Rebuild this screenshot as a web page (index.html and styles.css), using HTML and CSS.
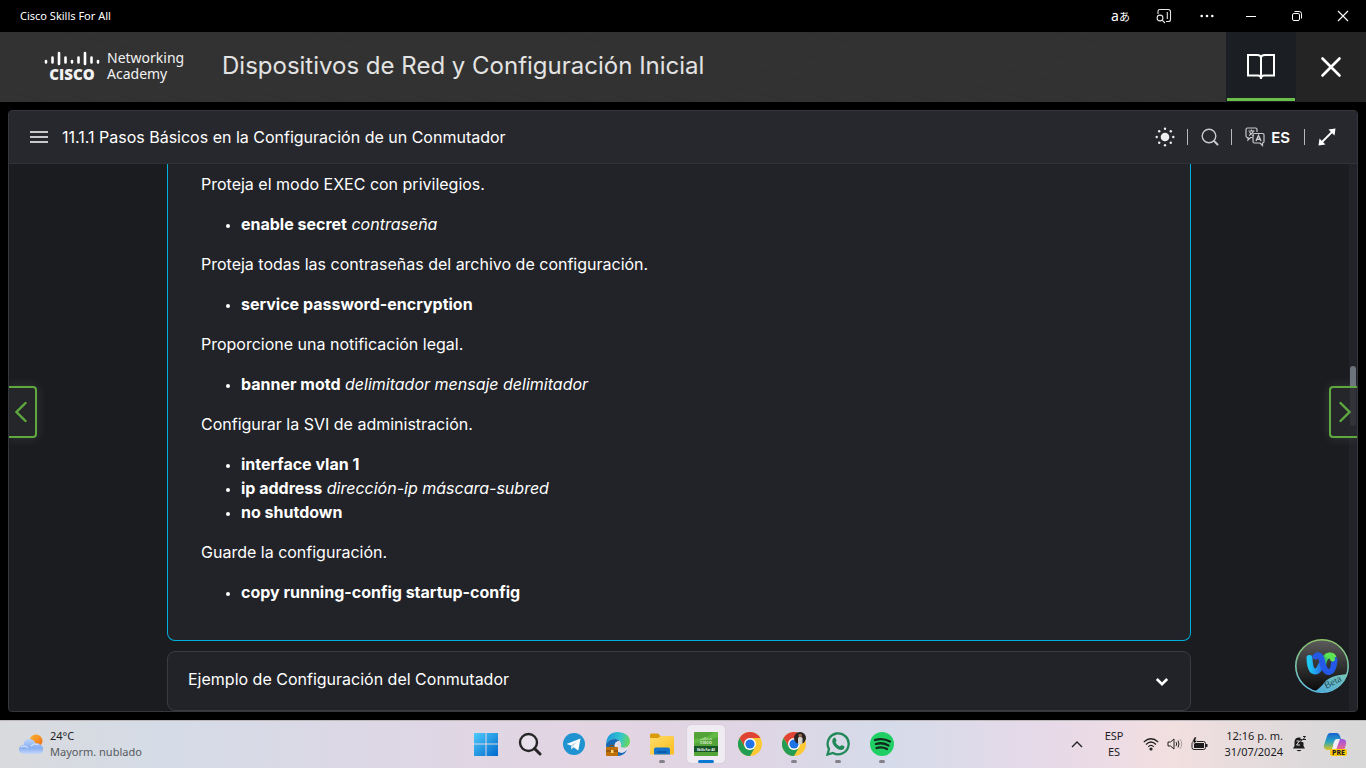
FILE: index.html
```html
<!DOCTYPE html>
<html lang="es">
<head>
<meta charset="utf-8">
<meta name="viewport" content="width=device-width, initial-scale=1">
<title>Cisco Skills For All</title>
<link rel="stylesheet" href="styles.css">
</head>
<body>
<div class="titlebar">
  <span class="titlebar-name">Cisco Skills For All</span>
  <div class="window-controls">
    <button class="win-btn translate-btn" aria-label="Traducir"><span class="latin-a">a</span><span class="kana-a">あ</span></button>
    <button class="win-btn" aria-label="Buscar en la barra lateral">
      <svg width="16" height="16" viewBox="0 0 16 16" fill="none" stroke="#e6e6e6" stroke-width="1.1"><path d="M2 6V3.2Q2 1.5 3.7 1.5H12.3Q14.5 1.5 14.5 3.7V11.5Q14.5 13.5 12.5 13.5H10M11.3 4V11"/><circle cx="4" cy="10" r="2.9"/><path d="M6.1 12.1L9 15"/></svg>
    </button>
    <button class="win-btn" aria-label="Más opciones">
      <svg width="16" height="16" viewBox="0 0 16 16" fill="#fff"><circle cx="2.7" cy="8" r="1.3"/><circle cx="8" cy="8" r="1.3"/><circle cx="13.3" cy="8" r="1.3"/></svg>
    </button>
    <button class="win-btn wide" aria-label="Minimizar">
      <svg width="12" height="12" viewBox="0 0 12 12" stroke="#fff"><path d="M1 6.5H11"/></svg>
    </button>
    <button class="win-btn wide" aria-label="Restaurar">
      <svg width="12" height="12" viewBox="0 0 12 12" fill="none" stroke="#fff"><rect x="1.5" y="3.5" width="7" height="7" rx="1.4"/><path d="M3.5 1.5H8.2Q10.5 1.5 10.5 3.8V8.5"/></svg>
    </button>
    <button class="win-btn wide" aria-label="Cerrar ventana">
      <svg width="12" height="12" viewBox="0 0 12 12" stroke="#fff" stroke-width="1.1"><path d="M1 1L11 11M11 1L1 11"/></svg>
    </button>
  </div>
</div>

<header class="course-header">
  <a class="brand" href="#" aria-label="Cisco Networking Academy">
    <span class="cisco-mark">
      <svg width="56" height="15" viewBox="0 0 56 15" stroke="#fff" stroke-width="2.6" stroke-linecap="round"><path d="M2 10V11.500M8.500 6.500V11.500M15 2V13M21.500 6.500V11.500M28 10V11.500M34.500 6.500V11.500M41 2V13M47.500 6.500V11.500M54 10V11.500"/></svg>
      <span class="cisco-word">CISCO</span>
    </span>
    <span class="academy-word">Networking<br>Academy</span>
  </a>
  <h1 class="course-title">Dispositivos de Red y Configuración Inicial</h1>
  <button class="header-tab" aria-label="Contenido del curso">
    <svg width="30" height="28" viewBox="0 0 30 28" fill="none" stroke="#fff" stroke-width="2"><path d="M2 2H11Q15 2 15 5Q15 2 19 2H28V22.5H18Q15 22.5 15 25.5Q15 22.5 12 22.5H2ZM15 5V26"/></svg>
  </button>
  <button class="header-close" aria-label="Cerrar curso">
    <svg width="22" height="22" viewBox="0 0 22 22" stroke="#fff" stroke-width="2.6" stroke-linecap="round"><path d="M2.5 2.5L19.5 19.5M19.5 2.5L2.5 19.5"/></svg>
  </button>
</header>

<main class="lesson">
  <div class="lesson-bar">
    <button class="tool menu-btn" aria-label="Menú">
      <svg width="18" height="14" viewBox="0 0 18 14" stroke="#c9c9cc" stroke-width="2"><path d="M0 2H18M0 7H18M0 12H18"/></svg>
    </button>
    <h2 class="lesson-title">11.1.1 Pasos Básicos en la Configuración de un Conmutador</h2>
    <div class="tools">
      <button class="tool" aria-label="Tema">
        <svg width="20" height="20" viewBox="0 0 20 20" fill="#eee"><circle cx="10" cy="10" r="4.3"/><circle cx="10" cy="1.7" r="1.2"/><circle cx="10" cy="18.3" r="1.2"/><circle cx="1.7" cy="10" r="1.2"/><circle cx="18.3" cy="10" r="1.2"/><circle cx="4.2" cy="4.2" r="1.2"/><circle cx="15.8" cy="4.2" r="1.2"/><circle cx="4.2" cy="15.8" r="1.2"/><circle cx="15.8" cy="15.8" r="1.2"/></svg>
      </button>
      <button class="tool ruled" aria-label="Buscar">
        <svg width="18" height="18" viewBox="0 0 18 18" fill="none" stroke="#c9c9cc" stroke-width="1.4"><circle cx="8" cy="8" r="6.8"/><path d="M13 13L16.5 16.5" stroke-width="2" stroke-linecap="round"/></svg>
      </button>
      <button class="tool ruled language">
        <svg width="20" height="20" viewBox="0 0 20 20" fill="none" stroke="#c9c9cc" stroke-width="1.2"><path d="M12 5V2.5Q12 1 10.5 1H2.5Q1 1 1 2.5V9Q1 10.5 2.5 10.5H3V13L5.5 10.5H7.5"/><path d="M3.5 4H9.5M6.5 2.5V4M8.5 4Q7.5 7 4 8.5M4.5 5Q6 8 9 8.5"/><path d="M9.5 6.5H17.5Q19 6.5 19 8V14.5Q19 16 17.5 16V18.5L15 16H9.5Q8 16 8 14.5V8Q8 6.5 9.5 6.5Z"/><path d="M11 14L13.5 8.5L16 14M11.8 12.2H15.2" stroke-width="1.4"/></svg>
        <span>ES</span>
      </button>
      <button class="tool ruled fullscreen" aria-label="Pantalla completa">
        <svg width="18" height="18" viewBox="0 0 18 18"><path d="M3 15L15 3" stroke="#fff" stroke-width="1.8"/><path d="M10.5 1.5L17.5 .5L16.5 7.5ZM.5 17.5L1.5 10.5L7.5 16.5Z" fill="#fff"/></svg>
      </button>
    </div>
  </div>

  <div class="lesson-body">
    <div class="scroll-area">
      <article class="steps">
        <p>Proteja el modo EXEC con privilegios.</p>
        <ul><li><b>enable secret</b> <i>contraseña</i></li></ul>
        <p>Proteja todas las contraseñas del archivo de configuración.</p>
        <ul><li><b>service password-encryption</b></li></ul>
        <p>Proporcione una notificación legal.</p>
        <ul><li><b>banner motd</b> <i>delimitador mensaje delimitador</i></li></ul>
        <p>Configurar la SVI de administración.</p>
        <ul>
          <li><b>interface vlan 1</b></li>
          <li><b>ip address</b> <i>dirección-ip máscara-subred</i></li>
          <li><b>no shutdown</b></li>
        </ul>
        <p>Guarde la configuración.</p>
        <ul><li><b>copy running-config startup-config</b></li></ul>
      </article>
      <button class="accordion" aria-expanded="false">
        <span>Ejemplo de Configuración del Conmutador</span>
        <svg width="14" height="10" viewBox="0 0 14 10" fill="none" stroke="#fff" stroke-width="2.6"><path d="M1.8 2L7 7.2L12.2 2"/></svg>
      </button>
    </div>
    <div class="scroll-track"></div>
    <div class="scroll-thumb"></div>
    <button class="page-nav prev" aria-label="Anterior">
      <svg width="14" height="22" viewBox="0 0 14 22" fill="none" stroke="#5fa83f" stroke-width="2.4" stroke-linecap="round"><path d="M10.5 2L1.500 11L10.5 20"/></svg>
    </button>
    <button class="page-nav next" aria-label="Siguiente">
      <svg width="14" height="22" viewBox="0 0 14 22" fill="none" stroke="#5fa83f" stroke-width="2.4" stroke-linecap="round"><path d="M3.5 2L12.500 11L3.5 20"/></svg>
    </button>
    <button class="assistant" aria-label="Asistente Beta">
      <svg width="56" height="56" viewBox="0 0 56 56">
        <defs>
          <linearGradient id="as-bg" x1="0" y1="0" x2="0" y2="1"><stop offset="0" stop-color="#5c5c5c"/><stop offset="1" stop-color="#080808"/></linearGradient>
          <linearGradient id="as-ring" x1="0" y1="0" x2="0" y2="1"><stop offset="0" stop-color="#8fc569"/><stop offset="1" stop-color="#62c4ea"/></linearGradient>
          <linearGradient id="as-left" x1="0" y1="0" x2="1" y2="0"><stop offset="0" stop-color="#20c8f4"/><stop offset="1" stop-color="#2474e8"/></linearGradient>
          <linearGradient id="as-right" x1="0" y1="1" x2="1" y2="0"><stop offset="0" stop-color="#159b80"/><stop offset="1" stop-color="#68f04c"/></linearGradient>
          <linearGradient id="as-tag" x1="0" y1="1" x2="1" y2="0"><stop offset="0" stop-color="#4aa8e0"/><stop offset="1" stop-color="#7ac8b4"/></linearGradient>
          <clipPath id="as-clip"><circle cx="28" cy="28" r="26"/></clipPath>
        </defs>
        <circle cx="28" cy="28" r="26.2" fill="url(#as-bg)" stroke="url(#as-ring)" stroke-width="1.6"/>
        <g fill="none" stroke-linecap="round" stroke-width="6">
          <path d="M29 28Q30 18 35.5 17.500Q39 17.500 39.5 20" stroke="url(#as-right)"/>
          <path d="M15.5 20Q16 34 21.5 33.5Q25 33 27 27" stroke="url(#as-left)"/>
          <path d="M21.500 18.500Q25 15 27.5 21Q30 34 34.5 34Q39.5 34 40.500 22" stroke="#2458e6"/>
          <path d="M34 17.500Q38 16.500 38.500 21" stroke="#5ce454" stroke-width="5"/>
        </g>
        <path d="M19 55Q27 49 30 45Q36 37 56 36V56H19Z" fill="url(#as-tag)" clip-path="url(#as-clip)"/>
        <text x="32" y="51" transform="rotate(-27 32 51)" class="beta">Beta</text>
      </svg>
    </button>
  </div>
</main>

<footer class="taskbar">
  <button class="weather">
    <svg width="26" height="22" viewBox="0 0 26 22">
      <defs><linearGradient id="cloud" x1="0" y1="0" x2="0" y2="1"><stop offset="0" stop-color="#bcd4fb"/><stop offset=".6" stop-color="#88aff1"/><stop offset="1" stop-color="#c5d7f8"/></linearGradient><linearGradient id="sun" x1="0" y1="0" x2="1" y2="1"><stop offset="0" stop-color="#fbb62c"/><stop offset="1" stop-color="#f16a1c"/></linearGradient></defs>
      <circle cx="18" cy="8" r="6.5" fill="url(#sun)"/>
      <path d="M5.5 21Q1 20 1 16.5Q1 12.5 5.5 12Q6 6 11.5 6Q16 6 17.5 10.5Q21 9.5 23 12Q25.5 13 25 17Q25 20.5 21 21Z" fill="url(#cloud)"/>
      <path d="M3 14.5Q6 11.5 10 15M13 13Q16 9.500 20 11.500" fill="none" stroke="#e0ebfe"/>
    </svg>
    <span class="weather-text"><span>24°C</span><span class="muted">Mayorm. nublado</span></span>
  </button>

  <nav class="apps" aria-label="Aplicaciones">
    <button class="app" aria-label="Inicio"><svg width="24" height="24" viewBox="0 0 24 24"><defs><linearGradient id="win" x1="0" y1="0" x2="1" y2="1"><stop offset="0" stop-color="#4dcbfa"/><stop offset="1" stop-color="#0069cd"/></linearGradient></defs><path d="M0 1H11.5V11.500H0ZM12.500 1H24V11.500H12.500ZM0 12.500H11.500V24H0ZM12.500 12.500H24V24H12.500Z" fill="url(#win)"/></svg></button>
    <button class="app" aria-label="Buscar"><svg width="24" height="24" viewBox="0 0 24 24" fill="#e8e0ea" stroke="#262626" stroke-width="2.400"><circle cx="10.500" cy="10.500" r="8.500"/><path d="M16.500 16.500L22 22" stroke-width="3" stroke-linecap="round"/></svg></button>
    <button class="app" aria-label="Telegram"><svg width="24" height="24" viewBox="0 0 24 24"><circle cx="12" cy="12" r="11" fill="#1f93d0"/><path d="M4.500 12L18.500 6.500L16.300 18.500L11.500 15.200L9.500 17.500L9 13.500Z" fill="#fff"/><path d="M9 13.500L15.500 9L10.800 14.500L9.700 17Z" fill="#b7d7e8"/></svg></button>
    <button class="app" aria-label="Edge"><svg width="24" height="24" viewBox="0 0 24 24"><defs><linearGradient id="edge" x1="0" y1=".3" x2="1" y2=".5"><stop offset="0" stop-color="#1b95dc"/><stop offset=".6" stop-color="#35c6cc"/><stop offset="1" stop-color="#69d65a"/></linearGradient></defs><path d="M0 12Q1 0 12 0Q24 1 24 10Q23 16 17 15.500Q14 15 15.200 13Q15 7 9 7Q3 7 0 12Z" fill="url(#edge)"/><path d="M0 12Q3 7 9 7Q12 7 13.500 9Q8 9 8.500 15Q10 21 21 18Q18 24 11 24Q0 23 0 12Z" fill="#1769b5"/><path d="M13.500 9Q10 12 12.500 16Q16 19 22 16Q20 20 16 21Q9 20 8.500 14Q9 9.500 13.500 9Z" fill="#e3e2ec"/><rect y="15" width="12" height="9" rx="1" fill="#bd7008"/><path d="M0 19H12" stroke="#70420d"/><path d="M4 15V13.500H8V15" fill="none" stroke="#845010"/><rect x="5" y="18" width="2.500" height="3" fill="#ffd56c"/></svg></button>
    <button class="app open" aria-label="Explorador de archivos"><svg width="24" height="24" viewBox="0 0 24 24"><defs><linearGradient id="fold" x1="0" y1="0" x2="1" y2="1"><stop offset="0" stop-color="#ffdc69"/><stop offset="1" stop-color="#fbbd20"/></linearGradient></defs><path d="M0 7V3Q0 1.500 1.500 1.500H8L11 4.500V8H0Z" fill="#d99b09"/><path d="M0 6H8L11 4H22.500Q24 4 24 5.500V22.500H0Z" fill="url(#fold)"/><path d="M4 22.500V17.500Q4 15.500 6 15.500H18Q20 15.500 20 17.500V22.500Z" fill="#1474cb"/><path d="M7 20H17" stroke="#0a559e" stroke-width="1.500"/></svg></button>
    <button class="app open active" aria-label="Cisco Skills For All"><svg width="24" height="24" viewBox="0 0 24 24"><rect width="24" height="24" rx="1" fill="#53a438"/><path d="M0 7Q14 7 20 0H24V5Q13 8 0 12Z" fill="#62b944"/><path d="M7 7V8M9 6V8M11 5V8M13 6V8M15 7V8M17 6V8" stroke="#dbecd6" stroke-width=".8"/><text x="12" y="12" class="tile-logo">CISCO</text><rect y="14" width="24" height="6" fill="#165425"/><text x="12" y="18.500" class="tile-name">Skills For All</text></svg></button>
    <button class="app" aria-label="Chrome"><svg width="24" height="24" viewBox="0 0 24 24"><g id="chrome"><circle cx="12" cy="12" r="12" fill="#fcc934"/><path d="M1.600 6A12 12 0 0 1 22.400 6H12L6.800 15Z" fill="#df4336"/><path d="M1.600 6L6.800 15Q9 18 12 18L17.200 15L12 24A12 12 0 0 1 1.600 6Z" fill="#229d53"/><circle cx="12" cy="12" r="6" fill="#fff"/><circle cx="12" cy="12" r="4.600" fill="#1f73e8"/></g></svg></button>
    <button class="app open" aria-label="Chrome, perfil"><svg width="24" height="24" viewBox="0 0 24 24"><use href="#chrome"/><circle cx="18" cy="6" r="6" fill="#292422"/><path d="M16 12V6Q18 3 20.500 6V11.500Q18 13 16 12Z" fill="#d4d0cb"/><circle cx="18.200" cy="3.500" r="1.700" fill="#a16d51"/></svg></button>
    <button class="app open" aria-label="WhatsApp"><svg width="24" height="24" viewBox="0 0 24 24"><path d="M1.500 22.500L3 17A10.500 10.500 0 1 1 7 21Z" fill="none" stroke="#218858" stroke-width="2.300"/><path d="M7.500 6Q8.500 5 9.500 6L10.500 8.500Q10.500 9.500 9.500 10.300Q11 13.500 14 14.500L15.200 13.200Q16.500 13 18.500 14.500Q18.500 17.500 15.500 18Q11 18 7.500 13Q5 9 7.500 6Z" fill="#218858"/></svg></button>
    <button class="app open" aria-label="Spotify"><svg width="24" height="24" viewBox="0 0 24 24"><circle cx="12" cy="12" r="12" fill="#20cf64"/><path d="M5 8Q13 5.500 20 9.500M6 12Q12.500 10 18.500 13.500M6.500 16Q12 14.500 17 17" fill="none" stroke="#12291b" stroke-width="2.300" stroke-linecap="round"/></svg></button>
  </nav>

  <div class="tray">
    <button class="tray-btn" aria-label="Iconos ocultos"><svg width="12" height="8" viewBox="0 0 12 8" fill="none" stroke="#222" stroke-width="1.400"><path d="M1 7L6 2L11 7"/></svg></button>
    <button class="tray-btn keyboard"><span>ESP</span><span>ES</span></button>
    <button class="tray-btn status" aria-label="Red, volumen y batería">
      <svg width="16" height="14" viewBox="0 0 16 14" fill="none" stroke="#222" stroke-width="1.200"><path d="M.8 5Q8-1.500 15.200 5M3 7.500Q8 2.500 13 7.500M5.200 9.800Q8 7 10.800 9.800"/><circle cx="8" cy="12" r="1" fill="#222"/></svg>
      <svg width="16" height="14" viewBox="0 0 16 14" fill="none" stroke="#222"><path d="M1 5H3.500L7 2V12L3.500 9H1ZM9 5Q10.500 7 9 9M11 3.500Q13 7 11 10.500"/><path d="M13 2Q16.500 7 13 12" stroke="#aaa2a2"/></svg>
      <svg width="17" height="14" viewBox="0 0 17 14"><rect x="1" y="4.500" width="13.500" height="8" rx="2" fill="none" stroke="#222"/><rect x="3" y="6" width="10" height="5" fill="#1b1b1b"/><path d="M15.500 7V10" stroke="#222" stroke-width="2"/><path d="M3.500 0L1 5H3L2 8L6.500 3.500H4.500L5.500 0Z" fill="#111" stroke="#f0dfe0" stroke-width=".6"/></svg>
    </button>
    <button class="tray-btn clock"><span>12:16 p. m.</span><span>31/07/2024</span></button>
    <button class="tray-btn bell" aria-label="Notificaciones"><svg width="16" height="18" viewBox="0 0 16 18"><path d="M1 13.500L2.500 11V6.500Q3 2.500 7 2.500H8.500V7.500H11.500V11L13 13.500Z" fill="#1c1c1c"/><path d="M4.500 15H9.500Q7 17.500 4.500 15Z" fill="#1c1c1c"/><path d="M4.500 6H7.500L4.500 10H8" fill="none" stroke="#ddd"/><path d="M8 4.500H10.500L8 7.500H11M11 1.500H13.500L11 4.500H14" fill="none" stroke="#222"/></svg></button>
    <button class="tray-btn copilot" aria-label="Copilot">
      <svg width="24" height="24" viewBox="0 0 24 24"><defs><linearGradient id="cop-a" x1="0" y1="0" x2="0" y2="1"><stop offset="0" stop-color="#1863d3"/><stop offset=".5" stop-color="#27a5c0"/><stop offset="1" stop-color="#e0c51d"/></linearGradient><linearGradient id="cop-b" x1="0" y1="0" x2="0" y2="1"><stop offset="0" stop-color="#9b55e3"/><stop offset="1" stop-color="#f66a83"/></linearGradient></defs><path d="M7 1H14Q16 1 17 4L18 7H14Q12 7 11 10L9 18H4Q0 17 1 13L4 4Q5 1 7 1Z" fill="url(#cop-a)"/><path d="M14 7H20Q24 8 23 12L21 19H10Q13 18 14 14Z" fill="url(#cop-b)"/><path d="M14 7H17L13 18H9L11 10Q12 7 14 7Z" fill="#f2edf7"/></svg>
      <span class="pre-badge">PRE</span>
    </button>
  </div>
</footer>
</body>
</html>
```
FILE: styles.css
```css
* { box-sizing: border-box; }

body {
  margin: 0;
  height: 100vh;
  display: flex;
  flex-direction: column;
  overflow: hidden;
  background: #000;
  color: #fff;
  font-family: Inter, "Liberation Sans", sans-serif;
  font-size: 16px;
}

button {
  margin: 0;
  padding: 0;
  border: 0;
  background: none;
  color: inherit;
  font: inherit;
  display: flex;
  align-items: center;
  justify-content: center;
}

svg { display: block; flex: none; }

/* Window title bar */
.titlebar {
  flex: none;
  height: 32px;
  display: flex;
  align-items: center;
  justify-content: space-between;
  padding-left: 20px;
  font-family: "Noto Sans", sans-serif;
  font-size: 11px;
}
.titlebar-name { line-height: 16px; }
.window-controls { display: flex; height: 100%; }
.win-btn { width: 43px; }
.win-btn.wide { width: 46px; }
.latin-a { font-size: 14px; line-height: 16px; }
.kana-a { font-family: "Noto Sans CJK JP", sans-serif; font-size: 11px; line-height: 16px; }

/* Course header */
.course-header {
  flex: none;
  height: 70px;
  display: flex;
  align-items: stretch;
  background: repeating-linear-gradient(14deg, #323232 0 11px, #303030 11px 12px);
}
.brand {
  width: 178px;
  padding: 0 0 2px 44px;
  display: flex;
  align-items: center;
  gap: 7px;
  flex: none;
  color: #f2f2f2;
  text-decoration: none;
}
.cisco-mark { display: flex; flex-direction: column; align-items: center; }
.cisco-word { font: 800 15px/16px "Open Sans", sans-serif; }
.academy-word { font: 14px/16px "Noto Sans", sans-serif; }
.course-title {
  flex: 1;
  margin: 0;
  padding: 0 0 2px 44px;
  align-self: center;
  font-size: 24px;
  font-weight: 400;
  line-height: 32px;
  color: #e3e3e3;
}
.header-tab {
  width: 70px;
  background: #1b1e22;
  border: solid #1b1e22;
  border-width: 0 1px 1px;
  box-shadow: inset 0 -3px #6abf4b;
}
.header-close { width: 70px; background: #242424; }

/* Lesson panel */
.lesson {
  flex: 1;
  min-height: 0;
  margin: 8px;
  display: flex;
  flex-direction: column;
  background: #1b1c20;
  border: 1px solid #36373c;
  border-radius: 4px;
  overflow: hidden;
}
.lesson-bar {
  flex: none;
  height: 53px;
  display: flex;
  align-items: center;
  padding: 0 21px;
  background: #27282d;
  border-bottom: 1px solid #323338;
}
.lesson-title {
  flex: 1;
  margin: 0 0 0 14px;
  font-size: 16px;
  font-weight: 400;
  line-height: 24px;
}
.tools { display: flex; align-items: center; }
.ruled { margin-left: 12px; }
.ruled::before {
  content: "";
  width: 1px;
  height: 16px;
  margin-right: 13px;
  background: #b9b9bc;
}
.language { font-size: 15px; font-weight: 600; }
.language span { margin-left: 6px; }
.fullscreen { margin-left: 14px; }

.lesson-body { flex: 1; min-height: 0; position: relative; }
.scroll-area {
  height: 100%;
  padding: 0 8px 0 0;
  overflow: hidden;
}
.steps,
.accordion {
  width: calc(100% - 32px);
  max-width: 1024px;
  margin: 0 auto;
  background: #222328;
}
.steps {
  padding: 8px 33px 20px;
  border: 1px solid #00b0dc;
  border-top: 0;
  border-radius: 0 0 8px 8px;
  font-size: 16px;
  line-height: 24px;
}
.steps p { margin: 0; }
.steps ul { margin: 16px 0; padding-left: 40px; }
.steps li::marker { font-size: 12px; }
.accordion {
  height: 60px;
  margin-top: 10px;
  padding: 0 21px 4px 20px;
  justify-content: space-between;
  border: 1px solid #3b3c41;
  border-radius: 8px;
}
.accordion svg { margin-top: 6px; }

.scroll-track {
  position: absolute;
  inset: 0 0 0 auto;
  width: 8px;
  background: #222328;
}
.scroll-thumb {
  position: absolute;
  right: 1px;
  top: 37%;
  width: 6px;
  height: 60px;
  border-radius: 3px;
  background: #6c737d;
}
.page-nav {
  position: absolute;
  top: 222px;
  width: 28px;
  height: 52px;
  border: 2px solid #5fa83f;
  background: rgba(39, 40, 45, .85);
  box-shadow: 0 0 12px rgba(190, 190, 190, .16);
}
.prev { left: 0; border-left: 0; border-radius: 0 4px 4px 0; }
.next { right: 0; border-right: 0; border-radius: 4px 0 0 4px; }
.assistant { position: absolute; right: 7px; bottom: 17px; }
.beta { font: 10px "Liberation Serif", serif; fill: #264b58; }

/* Taskbar */
.taskbar {
  flex: none;
  height: 48px;
  display: grid;
  grid-template-columns: 1fr auto 1fr;
  align-items: center;
  box-shadow: inset 0 1px #bdb9bd;
  background: linear-gradient(90deg, #d9dadd 0%, #d5dce7 12%, #dcd8e6 25%, #e3d4e2 43%, #e0d5e4 54%, #d5dbea 65%, #e7d9e8 77%, #f2dfe0 86%, #dcd9da 96%, #d8d8d8 100%);
  color: #1d1d1f;
  font-family: "Noto Sans", sans-serif;
  font-size: 11px;
  line-height: 16px;
}
.weather { justify-self: start; padding-left: 18px; gap: 6px; text-align: left; }
.weather-text { display: flex; flex-direction: column; }
.muted { color: #56595e; }
.apps { display: flex; gap: 6px; padding-left: 2px; }
.app { position: relative; width: 38px; height: 38px; border-radius: 4px; }
.app.active { background: #f0eaf2; box-shadow: 0 0 1px #a9a4ad; }
.app.open::after {
  content: "";
  position: absolute;
  bottom: 0;
  width: 6px;
  height: 3px;
  border-radius: 2px;
  background: #85818a;
}
.app.active::after { width: 16px; background: #0878d4; }
.tile-logo { font: bold 4px "Open Sans", sans-serif; fill: #e4f1df; text-anchor: middle; }
.tile-name { font: bold 3px "Open Sans", sans-serif; fill: #fff; text-anchor: middle; }

.tray { display: flex; justify-self: end; align-items: center; padding-right: 19px; }
.keyboard { flex-direction: column; margin-left: 22px; }
.status { gap: 8px; margin-left: 20px; }
.clock { flex-direction: column; align-items: flex-end; margin-left: 16px; }
.bell { margin-left: 9px; }
.copilot { position: relative; margin-left: 15px; }
.pre-badge {
  position: absolute;
  right: 0;
  bottom: 0;
  padding: 0 2px;
  border-radius: 2px;
  background: #fdc90d;
  font-size: 7px;
  font-weight: 800;
  line-height: 7px;
}
```
